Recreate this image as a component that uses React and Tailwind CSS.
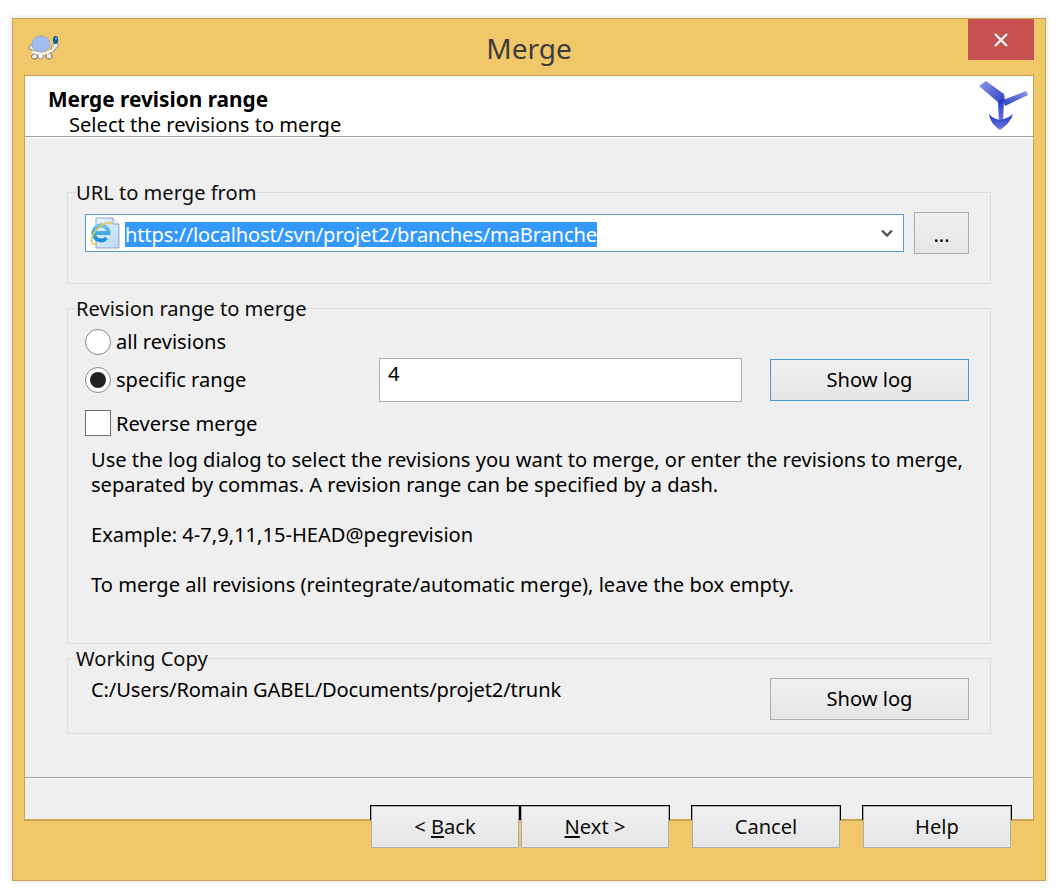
// App.jsx
import React from 'react';

const TurtleIcon = () => (
  <svg width="34" height="26" viewBox="0 0 34 26">
    <path d="M2 13 L8 7 L12 12 L7 16 Z" fill="#d8dce4" stroke="#777" strokeWidth="0.8" />
    <path d="M9 19 C5 19 4 24 9 24 C12 24 12 19 9 19 Z" fill="#f4f4f4" stroke="#666" strokeWidth="1" />
    <path d="M15 18 C11 18 11 24 15 24 C18 24 18 18 15 18 Z" fill="#ffffff" stroke="#777" strokeWidth="0.8" />
    <path d="M23 18 C19 18 19 24 23 24 C27 24 27 18 23 18 Z" fill="#f0f0f0" stroke="#666" strokeWidth="1" />
    <path d="M26 11 L30 7 L33 10 L28 16 L24 18 Z" fill="#e8e8e8" stroke="#777" strokeWidth="0.8" />
    <ellipse cx="15" cy="9" rx="9" ry="8" fill="#a3bdf2" stroke="#8aa2d8" strokeWidth="0.8" />
    <path d="M6 16.5 C11 19.5 20 19.5 26 15.5" fill="none" stroke="#f6f6f6" strokeWidth="2.4" />
    <ellipse cx="29.5" cy="5" rx="2.6" ry="4" fill="#0f5c9c" />
    <circle cx="30" cy="3.5" r="1" fill="#7fb4e0" />
  </svg>
);

const MergeArrow = () => (
  <svg width="50" height="52" viewBox="0 0 50 52">
    <defs>
      <linearGradient id="armLeft" x1="0" y1="0" x2="1" y2="1">
        <stop offset="0" stopColor="#8e9be6" />
        <stop offset="1" stopColor="#2a3fc4" />
      </linearGradient>
      <linearGradient id="armRight" x1="1" y1="0" x2="0" y2="1">
        <stop offset="0" stopColor="#8e9be6" />
        <stop offset="1" stopColor="#2a3fc4" />
      </linearGradient>
      <linearGradient id="stem" x1="0" y1="0" x2="0" y2="1">
        <stop offset="0" stopColor="#1f35c2" />
        <stop offset="1" stopColor="#6d80e0" />
      </linearGradient>
    </defs>
    <path d="M0 5 L7 0 L25 13 L26 20 L20 22 Z" fill="url(#armLeft)" />
    <path d="M47 10 L49 14 L26 25 L24 19 Z" fill="url(#armRight)" />
    <path d="M19 20 L25 18 L24 42 L20 42 Z" fill="url(#stem)" />
    <path d="M10 33 C12 36 16 38 21 39 C26 38 31 36 34 33 C32 40 27 45 21 49 C15 45 11 40 10 33 Z" fill="url(#stem)" />
  </svg>
);

const IeIcon = () => (
  <svg width="30" height="32" viewBox="0 0 30 32">
    <defs>
      <linearGradient id="page" x1="0" y1="0" x2="1" y2="1">
        <stop offset="0" stopColor="#e8f2fb" />
        <stop offset="1" stopColor="#bcd9f2" />
      </linearGradient>
      <linearGradient id="ieBlue" x1="0" y1="0" x2="0" y2="1">
        <stop offset="0" stopColor="#6cc7f2" />
        <stop offset="1" stopColor="#1b8fd8" />
      </linearGradient>
    </defs>
    <path d="M6 1 L23 1 L29 7 L29 31 L6 31 Z" fill="url(#page)" stroke="#8fa9c2" />
    <path d="M23 1 L23 7 L29 7" fill="#f4f8fc" stroke="#8fa9c2" />
    <path d="M3.5 16 H18.5 A7.5 7.5 0 1 0 16.5 21" fill="none" stroke="url(#ieBlue)" strokeWidth="4" />
    <path d="M22 6 C14 4 2 14 1.5 24 C1.5 27 4 28 7 26" fill="none" stroke="#e8c64a" strokeWidth="1.6" />
  </svg>
);

const btn = 'bg-gradient-to-b from-[#f0f0f0] to-[#e5e5e5] border text-center shrink-0';

const Group = ({ title, className, children }) => (
  <fieldset className={`border border-[#dcdcdc] ${className}`}>
    <legend className="ml-2 h-[26px] leading-[28px] text-[#0c0c0c]">{title}</legend>
    {children}
  </fieldset>
);

const Radio = ({ checked }) => (
  <span className="w-[26px] h-[26px] rounded-full border border-[#8a8a8a] bg-white flex items-center justify-center shrink-0">
    {checked && <span className="w-[16px] h-[16px] rounded-full bg-[#222222]"></span>}
  </span>
);

const WizardButton = ({ children }) => (
  <div className="w-[150px] h-[15px] border border-b-0 border-black shrink-0">
    <button className={`${btn} block w-full h-[42px] border-[#acacac] text-[#0c0c0c]`}>{children}</button>
  </div>
);

const App = () => {
  return (
    <div className="w-[1061px] h-[894px] bg-white pt-[18px] pl-[12px] text-[20.1px] text-black font-['Noto_Sans',sans-serif] overflow-hidden">
      <div className="w-[1034px] h-[863px] bg-[#f0c769] border border-[#c8a553] shadow-[0_0_6px_rgba(0,0,0,0.15)] flex flex-col">
        <div className="h-[56px] grid grid-cols-[1fr_auto_1fr] shrink-0">
          <div className="pl-[13px] pt-[16px]">
            <TurtleIcon />
          </div>
          <div className="text-[28px] leading-[58px] text-[#3c3c3c]">Merge</div>
          <div className="flex justify-end pr-[11px]">
            <div className="w-[66px] h-[41px] bg-[#c75050] flex items-center justify-center">
              <svg width="14" height="14" viewBox="0 0 14 14">
                <path d="M1 1 L13 13 M13 1 L1 13" stroke="white" strokeWidth="2.2" />
              </svg>
            </div>
          </div>
        </div>

        <div className="ml-[11px] mr-[11px] h-[746px] border border-[#c8a553] border-b-2 bg-[#efefef] flex flex-col">
          <div className="h-[61px] bg-white border-b border-[#a0a0a0] flex justify-between shrink-0">
            <div className="pl-[23px] pt-[11px] leading-[25px]">
              <div className="font-bold text-[20.8px]">Merge revision range</div>
              <div className="pl-[21px]">Select the revisions to merge</div>
            </div>
            <div className="pr-[4px] pt-[5px]">
              <MergeArrow />
            </div>
          </div>

          <div className="flex-1 border-t border-white px-[42px] pt-[41px] border-b border-b-[#a0a0a0]">
            <Group title="URL to merge from" className="h-[105px]">
              <div className="flex items-center gap-[10px] pt-[7px] pl-[17px]">
                <div className="w-[819px] h-[38px] border border-[#5a9bd8] bg-white flex items-center pl-[4px] relative">
                  <IeIcon />
                  <span className="ml-[5px] mt-[2px] h-[25px] leading-[25px] bg-[#3399ff] text-white tracking-[-0.15px]">
                    https://localhost/svn/projet2/branches/maBranche
                  </span>
                  <svg className="absolute right-[10px] top-[14px]" width="12" height="9" viewBox="0 0 12 9">
                    <path d="M1 1.5 L6 6.5 L11 1.5" fill="none" stroke="#555555" strokeWidth="2.4" />
                  </svg>
                </div>
                <button className={`${btn} w-[55px] h-[42px] border-[#acacac] leading-[44px]`}>...</button>
              </div>
            </Group>

            <Group title="Revision range to merge" className="h-[349px] mt-[11px]">
              <div className="pl-[17px]">
                <div className="flex items-center gap-[5px] pt-[8px] h-[34px]">
                  <Radio />
                  <span>all revisions</span>
                </div>
                <div className="flex items-center mt-[3px]">
                  <div className="w-[294px] flex items-center gap-[5px]">
                    <Radio checked />
                    <span>specific range</span>
                  </div>
                  <div className="w-[363px] h-[44px] border border-[#acacac] bg-white pl-[8px] leading-[30px]">4</div>
                  <button className={`${btn} w-[199px] h-[42px] ml-[28px] border-[#3d9be0]`}>Show log</button>
                </div>
                <div className="flex items-center gap-[5px] mt-[6px]">
                  <span className="w-[26px] h-[26px] border border-[#707070] bg-white shrink-0"></span>
                  <span className="translate-y-[1px]">Reverse merge</span>
                </div>
                <div className="pl-[6px] mt-[9px] leading-[25px]">
                  <p>Use the log dialog to select the revisions you want to merge, or enter the revisions to merge,</p>
                  <p>separated by commas. A revision range can be specified by a dash.</p>
                  <p className="mt-[25px]">Example: 4-7,9,11,15-HEAD@pegrevision</p>
                  <p className="mt-[25px]">To merge all revisions (reintegrate/automatic merge), leave the box empty.</p>
                </div>
              </div>
            </Group>

            <Group title="Working Copy" className="h-[89px] mt-[1px]">
              <div className="flex items-start pt-[7px] pl-[23px]">
                <div className="w-[679px] leading-[23px] tracking-[-0.13px]">C:/Users/Romain GABEL/Documents/projet2/trunk</div>
                <button className={`${btn} w-[199px] h-[42px] border-[#acacac]`}>Show log</button>
              </div>
            </Group>
          </div>

          <div className="h-[41px] border-t border-white flex items-end justify-end pr-[21px] shrink-0">
            <div className="flex gap-[21px] -mb-[1px]">
              <div className="flex">
                <WizardButton>
                  &lt; <span className="underline">B</span>ack
                </WizardButton>
                <WizardButton>
                  <span className="underline">N</span>ext &gt;
                </WizardButton>
              </div>
              <WizardButton>Cancel</WizardButton>
              <WizardButton>Help</WizardButton>
            </div>
          </div>
        </div>
      </div>
    </div>
  );
};

export default App;
